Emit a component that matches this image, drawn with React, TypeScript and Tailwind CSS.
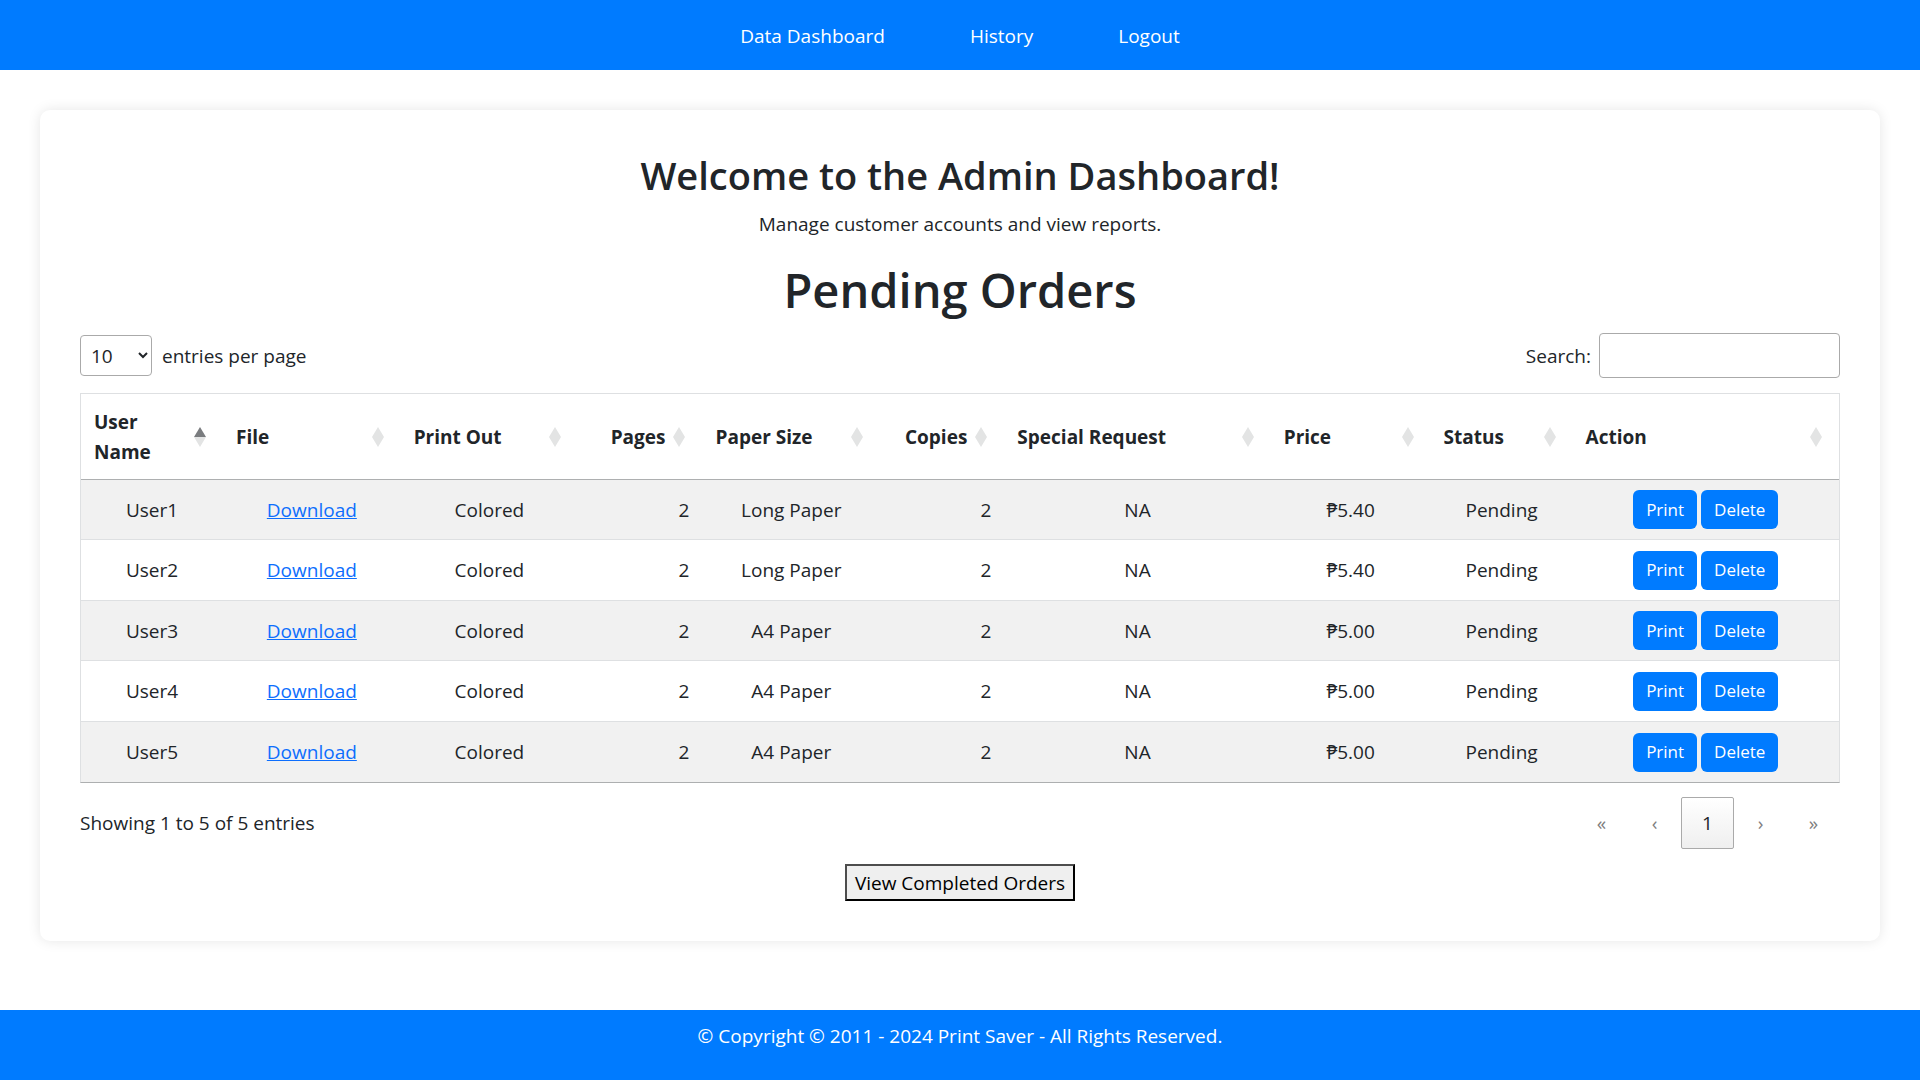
import React from "react";

type Align = "left" | "right";

const columns: { label: string; width: string; align: Align; sorted?: boolean }[] = [
  { label: "User Name", width: "w-[8%]", align: "left", sorted: true },
  { label: "File", width: "w-[10%]", align: "left" },
  { label: "Print Out", width: "w-[10%]", align: "left" },
  { label: "Pages", width: "w-[7%]", align: "right" },
  { label: "Paper Size", width: "w-[10%]", align: "left" },
  { label: "Copies", width: "w-[7%]", align: "right" },
  { label: "Special Request", width: "w-[15%]", align: "left" },
  { label: "Price", width: "w-[9%]", align: "left" },
  { label: "Status", width: "w-[8%]", align: "left" },
  { label: "Action", width: "w-[15%]", align: "left" },
];

const orders = [
  { user: "User1", paper: "Long Paper", price: "₱5.40" },
  { user: "User2", paper: "Long Paper", price: "₱5.40" },
  { user: "User3", paper: "A4 Paper", price: "₱5.00" },
  { user: "User4", paper: "A4 Paper", price: "₱5.00" },
  { user: "User5", paper: "A4 Paper", price: "₱5.00" },
];

function SortIcon({ active }: { active?: boolean }) {
  return (
    <svg width="12" height="20" viewBox="0 0 12 20" className="shrink-0" aria-hidden="true">
      <path d="M6 0 12 10H0Z" fill={active ? "#7a7c7f" : "#e3e4e4"} />
      <path d="M0 10H12L6 20Z" fill="#e3e4e4" />
    </svg>
  );
}

function ActionButton({ children }: { children: React.ReactNode }) {
  return (
    <button type="button" className="h-[39px] rounded-md bg-[#007bff] px-[13px] text-[17px] leading-6 text-white">
      {children}
    </button>
  );
}

function PageButton({ label, text, current }: { label: string; text: string; current?: boolean }) {
  return current ? (
    <button
      type="button"
      aria-label={label}
      aria-current="page"
      className="h-[52px] w-[53px] rounded-xs border border-[#aaaaaa] bg-linear-to-b from-white to-[#efefef]"
    >
      {text}
    </button>
  ) : (
    <button type="button" aria-label={label} disabled className="h-[52px] w-[53px] text-[#7f7f7f]">
      {text}
    </button>
  );
}

export default function App() {
  return (
    <div className="flex min-h-screen flex-col bg-white font-['Open_Sans','Noto_Sans',sans-serif] text-[19px] leading-[30px] text-[#212529]">
      <header className="bg-[#007bff] pt-[21px] pb-[19px] text-white">
        <nav className="flex justify-center gap-[85px]">
          <a href="#dashboard">Data Dashboard</a>
          <a href="#history">History</a>
          <a href="#logout">Logout</a>
        </nav>
      </header>

      <main className="m-10 rounded-[10px] px-10 pt-[41px] pb-10 shadow-[0_0_13px_rgba(0,0,0,0.1)]">
        <h2 className="mb-2.5 text-center text-[38px] leading-[48px] font-semibold">Welcome to the Admin Dashboard!</h2>
        <p className="mb-[21px] text-center">Manage customer accounts and view reports.</p>
        <h1 className="text-center text-[47px] leading-[60px] font-semibold">Pending Orders</h1>

        <div className="mt-[13px] flex items-center justify-between">
          <div className="flex items-center gap-2.5">
            <select
              id="page-length"
              defaultValue="10"
              className="h-[41px] w-[72px] rounded-[4px] border border-[#aaaaaa] bg-transparent px-1.5"
            >
              <option>10</option>
              <option>25</option>
              <option>50</option>
              <option>100</option>
            </select>
            <label htmlFor="page-length">entries per page</label>
          </div>
          <div className="flex items-center gap-2">
            <label htmlFor="search">Search:</label>
            <input
              id="search"
              type="search"
              className="h-[45px] w-[241px] rounded-[4px] border border-[#aaaaaa] bg-transparent px-1.5"
            />
          </div>
        </div>

        <table className="mt-[15px] w-full table-fixed border-separate border-spacing-0 border-x border-t border-b border-[#dee0e2] border-b-[#adafb0]">
          <thead>
            <tr>
              {columns.map((c) => (
                <th
                  key={c.label}
                  scope="col"
                  aria-sort={c.sorted ? "ascending" : "none"}
                  className={`${c.width} h-[86px] border-b border-[#adafb0] pr-[17px] pl-[13px] font-bold`}
                >
                  <div className={`flex items-center gap-2 ${c.align === "right" ? "justify-end" : "justify-between text-left"}`}>
                    <span>{c.label}</span>
                    <SortIcon active={c.sorted} />
                  </div>
                </th>
              ))}
            </tr>
          </thead>
          <tbody>
            {orders.map((o, i) => {
              const line = i < orders.length - 1 ? "border-b border-[#dee0e2]" : "";
              return (
                <tr key={o.user} className="h-[60px] text-center odd:bg-[#f1f1f1] even:h-[61px]">
                  <td className={line}>{o.user}</td>
                  <td className={line}>
                    <a href={`#${o.user}`} className="text-[#0d6efd] underline">Download</a>
                  </td>
                  <td className={line}>Colored</td>
                  <td className={`${line} pr-[13px] text-right`}>2</td>
                  <td className={line}>{o.paper}</td>
                  <td className={`${line} pr-[13px] text-right`}>2</td>
                  <td className={line}>NA</td>
                  <td className={line}>{o.price}</td>
                  <td className={line}>Pending</td>
                  <td className={line}>
                    <div className="flex justify-center gap-1">
                      <ActionButton>Print</ActionButton>
                      <ActionButton>Delete</ActionButton>
                    </div>
                  </td>
                </tr>
              );
            })}
          </tbody>
        </table>

        <div className="mt-[14px] flex items-center justify-between">
          <p>Showing 1 to 5 of 5 entries</p>
          <nav aria-label="Pagination" className="flex">
            <PageButton label="First" text="«" />
            <PageButton label="Previous" text="‹" />
            <PageButton label="Page 1" text="1" current />
            <PageButton label="Next" text="›" />
            <PageButton label="Last" text="»" />
          </nav>
        </div>

        <div className="mt-[15px] flex justify-center">
          <button type="button" className="h-[37px] border-2 border-t-[#4d4d4d] border-r-black border-b-black border-l-[#4d4d4d] bg-[#efefef] px-2 text-black">
            View Completed Orders
          </button>
        </div>
      </main>

      <footer className="mt-auto bg-[#007bff] pt-[11px] pb-[29px] text-center text-white">
        <p>© Copyright © 2011 - 2024 Print Saver - All Rights Reserved.</p>
      </footer>
    </div>
  );
}
